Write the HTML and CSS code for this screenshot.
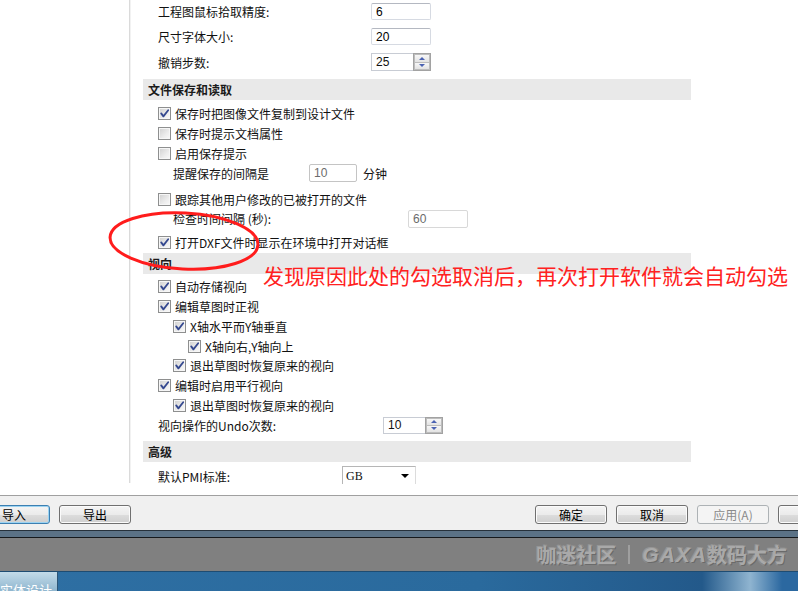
FILE: index.html
```html
<!DOCTYPE html>
<html lang="zh-CN">
<head>
<meta charset="utf-8">
<title>选项</title>
<link rel="stylesheet" href="styles.css">
</head>
<body>
<div class="screen">
  <div class="content">
    <div class="tree"></div>
    <div class="panel">
      <div class="opts">
        <div class="row t25 mtn1"><span class="lbl w213">工程图鼠标拾取精度:</span><span class="edit w60">6</span></div>
        <div class="row t25"><span class="lbl w213">尺寸字体大小:</span><span class="edit w60">20</span></div>
        <div class="row t26"><span class="lbl w213">撤销步数:</span>
          <span class="spin w60"><span class="val">25</span><span class="btns"><span class="sb up"></span><span class="sb dn"></span></span></span></div>

        <div class="sec mt4">文件保存和读取</div>
        <div class="row mt3"><span class="cb"><svg viewBox="0 0 11 11" width="11" height="11"><path d="M2.2 5.4 L4.4 8.4 L9.2 2.2" fill="none" stroke="#34488f" stroke-width="1.8" stroke-linecap="round" stroke-linejoin="round"/></svg></span>保存时把图像文件复制到设计文件</div>
        <div class="row"><span class="cb"></span>保存时提示文档属性</div>
        <div class="row"><span class="cb"></span>启用保存提示</div>
        <div class="row in1"><span class="lbl w136">提醒保存的间隔是</span><span class="edit dis w48">10</span><span class="unit">分钟</span></div>
        <div class="row mt6"><span class="cb"></span>跟踪其他用户修改的已被打开的文件</div>
        <div class="row in1 h19"><span class="lbl w235">检查时间间隔 (秒):</span><span class="edit dis w60 light">60</span></div>
        <div class="row mt4"><span class="cb"><svg viewBox="0 0 11 11" width="11" height="11"><path d="M2.2 5.4 L4.4 8.4 L9.2 2.2" fill="none" stroke="#34488f" stroke-width="1.8" stroke-linecap="round" stroke-linejoin="round"/></svg></span>打开DXF文件时显示在环境中打开对话框</div>

        <div class="sec mt1">视向</div>
        <div class="row hv mt3"><span class="cb"><svg viewBox="0 0 11 11" width="11" height="11"><path d="M2.2 5.4 L4.4 8.4 L9.2 2.2" fill="none" stroke="#34488f" stroke-width="1.8" stroke-linecap="round" stroke-linejoin="round"/></svg></span>自动存储视向</div>
        <div class="row hv"><span class="cb"><svg viewBox="0 0 11 11" width="11" height="11"><path d="M2.2 5.4 L4.4 8.4 L9.2 2.2" fill="none" stroke="#34488f" stroke-width="1.8" stroke-linecap="round" stroke-linejoin="round"/></svg></span>编辑草图时正视</div>
        <div class="row hv in1"><span class="cb"><svg viewBox="0 0 11 11" width="11" height="11"><path d="M2.2 5.4 L4.4 8.4 L9.2 2.2" fill="none" stroke="#34488f" stroke-width="1.8" stroke-linecap="round" stroke-linejoin="round"/></svg></span>X轴水平而Y轴垂直</div>
        <div class="row hv in2"><span class="cb"><svg viewBox="0 0 11 11" width="11" height="11"><path d="M2.2 5.4 L4.4 8.4 L9.2 2.2" fill="none" stroke="#34488f" stroke-width="1.8" stroke-linecap="round" stroke-linejoin="round"/></svg></span>X轴向右,Y轴向上</div>
        <div class="row hv in1"><span class="cb"><svg viewBox="0 0 11 11" width="11" height="11"><path d="M2.2 5.4 L4.4 8.4 L9.2 2.2" fill="none" stroke="#34488f" stroke-width="1.8" stroke-linecap="round" stroke-linejoin="round"/></svg></span>退出草图时恢复原来的视向</div>
        <div class="row hv"><span class="cb"><svg viewBox="0 0 11 11" width="11" height="11"><path d="M2.2 5.4 L4.4 8.4 L9.2 2.2" fill="none" stroke="#34488f" stroke-width="1.8" stroke-linecap="round" stroke-linejoin="round"/></svg></span>编辑时启用平行视向</div>
        <div class="row hv in1"><span class="cb"><svg viewBox="0 0 11 11" width="11" height="11"><path d="M2.2 5.4 L4.4 8.4 L9.2 2.2" fill="none" stroke="#34488f" stroke-width="1.8" stroke-linecap="round" stroke-linejoin="round"/></svg></span>退出草图时恢复原来的视向</div>
        <div class="row hv"><span class="lbl w225">视向操作的Undo次数:</span>
          <span class="spin w60 short"><span class="val">10</span><span class="btns"><span class="sb up"></span><span class="sb dn"></span></span></span></div>

        <div class="sec mt6">高级</div>
        <div class="row mt5"><span class="lbl w184">默认PMI标准:</span><span class="combo">GB</span></div>
      </div>
    </div>
  </div>

  <div class="bar">
    <span class="btn first def">导入</span>
    <span class="btn">导出</span>
    <span class="btn right">确定</span>
    <span class="btn">取消</span>
    <span class="btn dis">应用(A)</span>
    <span class="btn"></span>
  </div>
  <div class="stripe"></div>
  <div class="band">
    <div class="wm"><span class="wm-cn">咖迷社区</span><span class="wm-sep"></span><span class="wm-en">GAXA</span><span class="wm-cn">数码大方</span></div>
  </div>
  <div class="taskbar">
    <div class="tab">实体设计</div>
    <div class="task-rest"></div>
  </div>

  <svg class="ring" viewBox="0 0 170 75" width="170" height="75"><ellipse cx="84" cy="36" rx="74" ry="28" fill="none" stroke="#ff1c1c" stroke-width="3" transform="rotate(3 84 36)"/></svg>
  <div class="note">发现原因此处的勾选取消后，再次打开软件就会自动勾选</div>
</div>
</body>
</html>
```

FILE: styles.css
```css
* { box-sizing: border-box; }
html, body { margin: 0; padding: 0; }
body {
  width: 798px;
  height: 591px;
  overflow: hidden;
  background: #fff;
  font-family: "Noto Sans CJK SC", "Noto Sans", sans-serif;
  font-size: 12px;
  color: #000;
}
.screen {
  position: relative;
  width: 798px;
  height: 591px;
  overflow: hidden;
  display: flex;
  flex-direction: column;
}
.content {
  flex: none;
  height: 495px;
  background: #fff;
  display: flex;
  align-items: flex-start;
}
.tree {
  flex: none;
  width: 131px;
  height: 483px;
  border-right: 1px solid #f2f2f2;
  box-shadow: inset -1px 0 0 #dadada;
}
.panel {
  flex: none;
  width: 667px;
  height: 484px;
  overflow: hidden;
}
.opts {
  margin-left: 12px;
  width: 548px;
}
.sec {
  height: 21px;
  background: #e9e9e9;
  font-weight: bold;
  padding-left: 5px;
  display: flex;
  align-items: center;
  color: #1b1b1b;
}
.row {
  display: flex;
  align-items: center;
  height: 20px;
  padding-left: 15px;
  white-space: nowrap;
  color: #111;
}
.t25 { height: 25px; }
.t26 { height: 26px; }
.h19 { height: 19px; }
.hv { height: 19.75px; }
.mtn1 { margin-top: -1px; }
.mt1 { margin-top: 1px; }
.mt3 { margin-top: 3px; }
.mt4 { margin-top: 4px; }
.mt5 { margin-top: 4px; }
.mt6 { margin-top: 6px; }
.in1 { padding-left: 30px; }
.in2 { padding-left: 45px; }

.lbl { flex: none; }
.w136 { width: 136px; }
.w184 { width: 184px; }
.w213 { width: 213px; }
.w225 { width: 225px; }
.w235 { width: 235px; }
.w48 { width: 48px; }
.w60 { width: 60px; }

.cb {
  flex: none;
  width: 13px;
  height: 13px;
  margin-right: 4px;
  border: 1px solid #8e8f8f;
  background: linear-gradient(135deg, #cfcfcf 0%, #ececec 60%, #fafafa 100%);
  box-shadow: inset 0 0 0 1px #f6f6f6;
  display: flex;
  align-items: center;
  justify-content: center;
}
.cb svg { display: block; }

.edit {
  flex: none;
  height: 17px;
  border: 1px solid #d6dae2;
  border-top-color: #b4b8c1;
  border-radius: 2px;
  padding-left: 4px;
  font-family: "Liberation Sans", sans-serif;
  font-size: 12px;
  display: flex;
  align-items: center;
  background: #fff;
  color: #000;
}
.edit.dis {
  color: #6b6b6b;
  border-color: #c4c4c4;
  height: 18px;
}
.edit.light { border-color: #d8d8d8; }
.unit { margin-left: 6px; }

.spin {
  flex: none;
  display: flex;
  height: 18px;
  border: 1px solid #c8ccd4;
  background: #fff;
}
.spin.short { height: 17px; }
.spin .val {
  flex: 1;
  padding-left: 4px;
  display: flex;
  align-items: center;
  font-family: "Liberation Sans", sans-serif;
  font-size: 12px;
}
.spin .btns {
  flex: none;
  width: 18px;
  margin: -1px -1px -1px 0;
  border: 1px solid #a2a2a2;
  padding: 1px;
  display: flex;
  flex-direction: column;
  gap: 1px;
  background: #bdbdbd;
}
.sb {
  flex: 1;
  display: flex;
  align-items: center;
  justify-content: center;
  background: linear-gradient(#f7f7f7, #e3e3e3);
}
.sb.up::after {
  content: "";
  border-left: 3px solid transparent;
  border-right: 3px solid transparent;
  border-bottom: 3px solid #4b62b2;
}
.sb.dn::after {
  content: "";
  border-left: 3px solid transparent;
  border-right: 3px solid transparent;
  border-top: 3px solid #4b62b2;
}

.combo {
  flex: none;
  width: 74px;
  height: 21px;
  border: 1px solid #b6b6b6;
  border-right-color: #dcdcdc;
  background: #fff;
  display: flex;
  align-items: center;
  justify-content: space-between;
  padding: 0 6px 0 3px;
  font-family: "Liberation Serif", serif;
  font-size: 12px;
}
.combo::after {
  content: "";
  border-left: 4px solid transparent;
  border-right: 4px solid transparent;
  border-top: 4px solid #000;
}

.bar {
  flex: none;
  height: 35px;
  background: #f0f0f0;
  border-top: 1px solid #a0a0a0;
  display: flex;
  align-items: flex-start;
  padding-top: 9px;
  white-space: nowrap;
}
.btn {
  flex: none;
  width: 72px;
  height: 19px;
  margin-right: 9px;
  border: 1px solid #707070;
  border-radius: 3px;
  background: linear-gradient(#f4f4f4 0%, #ebebeb 50%, #dddddd 51%, #cfcfcf 100%);
  box-shadow: inset 0 0 0 1px #fbfbfb;
  display: flex;
  align-items: center;
  justify-content: center;
  font-size: 12px;
  line-height: 17px;
  color: #000;
}
.btn.first { margin-left: -22px; }
.btn.def {
  border-color: #3c7fb1;
  box-shadow: inset 0 0 0 1px #9bd3f2;
}
.btn.right { margin-left: 395px; }
.btn.dis {
  border-color: #adb2b5;
  background: #f4f4f4;
  box-shadow: none;
  color: #8a8a8a;
}

.stripe {
  flex: none;
  height: 8px;
  background: #5b7286;
  border-top: 1px solid #26313b;
  border-bottom: 1px solid #16191c;
}
.band {
  flex: none;
  height: 33px;
  background: #808080;
  display: flex;
  align-items: center;
  justify-content: flex-end;
  padding-right: 11px;
}
.wm {
  display: flex;
  align-items: center;
  font-weight: bold;
  font-size: 20px;
  line-height: 20px;
  color: #a9a9a9;
  text-shadow: 1px 1px 0 #6a6a6a, -1px -1px 0 #969696, 1px -1px 0 #8c8c8c, -1px 1px 0 #8c8c8c;
}
.wm-sep {
  width: 2px;
  height: 19px;
  background: #9f9f9f;
  margin: 0 12px;
}
.wm-en {
  font-family: "Liberation Sans", sans-serif;
  font-style: italic;
  font-size: 21px;
  letter-spacing: 1px;
}
.taskbar {
  flex: none;
  height: 20px;
  border-top: 1px solid #1e4c72;
  display: flex;
  background: linear-gradient(90deg, #2e6fa3 0%, #2a6a9d 60%, #23598a 88%, #8fb4d0 94%, #2b68a0 98%);
}
.tab {
  flex: none;
  width: 58px;
  height: 100%;
  background: linear-gradient(#c3dbe9, #8fb6cf);
  border-right: 1px solid #2c5577;
  color: #fff;
  font-size: 13px;
  line-height: 14px;
  padding-top: 11px;
  overflow: hidden;
  white-space: nowrap;
}
.task-rest { flex: 1; }

.ring {
  position: absolute;
  left: 100px;
  top: 205px;
  pointer-events: none;
}
.note {
  position: absolute;
  left: 263px;
  top: 265px;
  font-size: 21px;
  line-height: 21px;
  color: #ff2121;
  white-space: nowrap;
}
```
